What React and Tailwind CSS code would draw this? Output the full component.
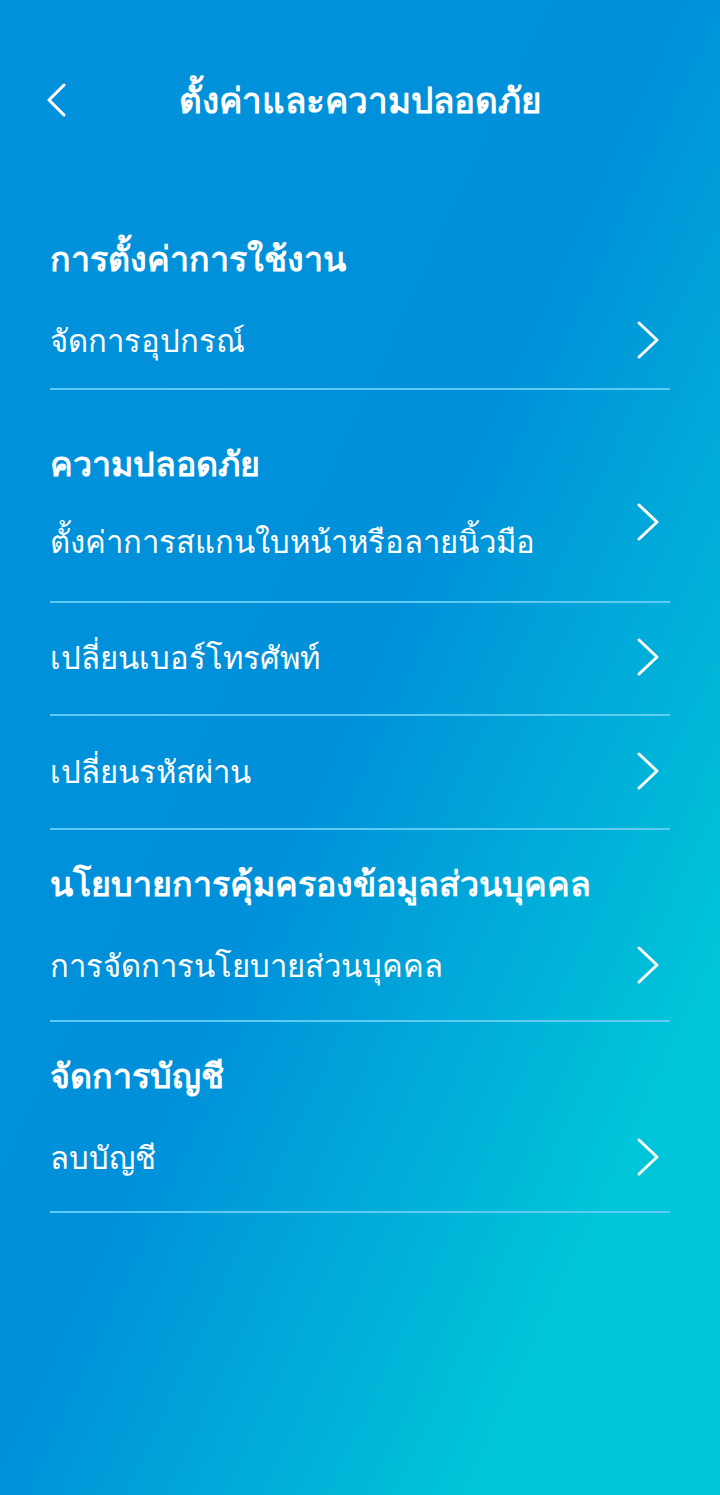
import React from "react";

function Chevron({ className = "" }) {
  return (
    <svg width="24" height="40" viewBox="0 0 24 40" className={className} fill="none">
      <polyline points="3,3 21,20 3,37" stroke="white" strokeWidth="3" strokeLinecap="round" strokeLinejoin="round" />
    </svg>
  );
}

function BackChevron() {
  return (
    <svg width="22" height="34" viewBox="0 0 22 34" fill="none">
      <polyline points="18,2 3,17 18,32" stroke="white" strokeWidth="3" strokeLinecap="round" strokeLinejoin="round" />
    </svg>
  );
}

function Divider() {
  return <div className="h-[2px] w-full bg-[#5ecbf3]" />;
}

export default function App() {
  return (
    <div
      className="w-[720px] h-[1495px] overflow-hidden text-white bg-[linear-gradient(115deg,#0291db_0%,#0090da_48%,#00c4d8_82%,#00c6d9_100%)]"
      style={{ fontFamily: '"Noto Sans", "Open Sans", sans-serif' }}
    >
      {/* Header */}
      <div className="mt-[60px] h-[80px] px-[46px] flex items-center relative">
        <BackChevron />
        <div className="absolute inset-0 flex items-center justify-center text-[35px] font-semibold">
          ตั้งค่าและความปลอดภัย
        </div>
      </div>

      <div className="px-[50px]">
        {/* Section 1 */}
        <div className="mt-[88px] h-[60px] flex items-center text-[34px] font-bold">การตั้งค่าการใช้งาน</div>
        <div className="pt-[32px] pb-[28px] flex items-center justify-between">
          <span className="text-[31px] leading-[40px]">จัดการอุปกรณ์</span>
          <Chevron className="mr-[10px]" />
        </div>
        <Divider />

        {/* Section 2 */}
        <div className="mt-[43px] h-[60px] flex items-center text-[34px] font-bold">ความปลอดภัย</div>
        <div className="pb-[40px] flex items-start justify-between">
          <span className="mt-[28px] text-[31px] leading-[40px]">ตั้งค่าการสแกนใบหน้าหรือลายนิ้วมือ</span>
          <Chevron className="mt-[9px] mr-[10px]" />
        </div>
        <Divider />
        <div className="pt-[34px] pb-[37px] flex items-center justify-between">
          <span className="text-[31px] leading-[40px]">เปลี่ยนเบอร์โทรศัพท์</span>
          <Chevron className="mr-[10px]" />
        </div>
        <Divider />
        <div className="pt-[35px] pb-[37px] flex items-center justify-between">
          <span className="text-[31px] leading-[40px]">เปลี่ยนรหัสผ่าน</span>
          <Chevron className="mr-[10px]" />
        </div>
        <Divider />

        {/* Section 3 */}
        <div className="mt-[23px] h-[60px] flex items-center text-[34px] font-bold">นโยบายการคุ้มครองข้อมูลส่วนบุคคล</div>
        <div className="pt-[32px] pb-[35px] flex items-center justify-between">
          <span className="text-[31px] leading-[40px]">การจัดการนโยบายส่วนบุคคล</span>
          <Chevron className="mr-[10px]" />
        </div>
        <Divider />

        {/* Section 4 */}
        <div className="mt-[23px] h-[60px] flex items-center text-[34px] font-bold">จัดการบัญชี</div>
        <div className="pt-[32px] pb-[34px] flex items-center justify-between">
          <span className="text-[31px] leading-[40px]">ลบบัญชี</span>
          <Chevron className="mr-[10px]" />
        </div>
        <Divider />
      </div>
    </div>
  );
}
